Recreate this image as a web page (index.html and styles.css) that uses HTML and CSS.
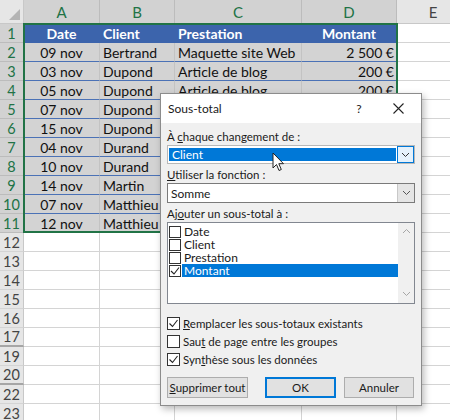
FILE: index.html
```html
<!DOCTYPE html>
<html lang="fr">
<head>
<meta charset="utf-8">
<title>Sous-total</title>
<link rel="stylesheet" href="styles.css">
</head>
<body>
<div class="sheet">
  <div class="row colheads">
    <div class="corner"><span class="tri"></span></div>
    <div class="ch sel">A</div>
    <div class="ch sel">B</div>
    <div class="ch sel">C</div>
    <div class="ch sel">D</div>
    <div class="ch">E</div>
  </div>
  <div class="row thead">
    <div class="rh sel">1</div>
    <div class="c hd center">Date</div>
    <div class="c hd">Client</div>
    <div class="c hd">Prestation</div>
    <div class="c hd center">Montant</div>
    <div class="c e"></div>
  </div>
  <div class="row data"><div class="rh sel">2</div><div class="c center">09 nov</div><div class="c">Bertrand</div><div class="c">Maquette site Web</div><div class="c right">2 500 €</div><div class="c e"></div></div>
  <div class="row data"><div class="rh sel">3</div><div class="c center">03 nov</div><div class="c">Dupond</div><div class="c">Article de blog</div><div class="c right">200 €</div><div class="c e"></div></div>
  <div class="row data"><div class="rh sel">4</div><div class="c center">05 nov</div><div class="c">Dupond</div><div class="c">Article de blog</div><div class="c right">200 €</div><div class="c e"></div></div>
  <div class="row data"><div class="rh sel">5</div><div class="c center">07 nov</div><div class="c">Dupond</div><div class="c">Article de blog</div><div class="c right">200 €</div><div class="c e"></div></div>
  <div class="row data"><div class="rh sel">6</div><div class="c center">15 nov</div><div class="c">Dupond</div><div class="c">Article de blog</div><div class="c right">200 €</div><div class="c e"></div></div>
  <div class="row data"><div class="rh sel">7</div><div class="c center">04 nov</div><div class="c">Durand</div><div class="c">Article de blog</div><div class="c right">200 €</div><div class="c e"></div></div>
  <div class="row data"><div class="rh sel">8</div><div class="c center">10 nov</div><div class="c">Durand</div><div class="c">Article de blog</div><div class="c right">200 €</div><div class="c e"></div></div>
  <div class="row data"><div class="rh sel">9</div><div class="c center">14 nov</div><div class="c">Martin</div><div class="c">Article de blog</div><div class="c right">200 €</div><div class="c e"></div></div>
  <div class="row data"><div class="rh sel">10</div><div class="c center">07 nov</div><div class="c">Matthieu</div><div class="c">Article de blog</div><div class="c right">200 €</div><div class="c e"></div></div>
  <div class="row data last"><div class="rh sel">11</div><div class="c center">12 nov</div><div class="c">Matthieu</div><div class="c">Article de blog</div><div class="c right">200 €</div><div class="c e"></div></div>
  <div class="row blank"><div class="rh">12</div><div class="c"></div><div class="c"></div><div class="c"></div><div class="c"></div><div class="c"></div></div>
  <div class="row blank"><div class="rh">13</div><div class="c"></div><div class="c"></div><div class="c"></div><div class="c"></div><div class="c"></div></div>
  <div class="row blank"><div class="rh">14</div><div class="c"></div><div class="c"></div><div class="c"></div><div class="c"></div><div class="c"></div></div>
  <div class="row blank"><div class="rh">15</div><div class="c"></div><div class="c"></div><div class="c"></div><div class="c"></div><div class="c"></div></div>
  <div class="row blank"><div class="rh">16</div><div class="c"></div><div class="c"></div><div class="c"></div><div class="c"></div><div class="c"></div></div>
  <div class="row blank"><div class="rh hid">17</div><div class="c"></div><div class="c"></div><div class="c"></div><div class="c"></div><div class="c"></div></div>
  <div class="row blank"><div class="rh">19</div><div class="c"></div><div class="c"></div><div class="c"></div><div class="c"></div><div class="c"></div></div>
  <div class="row blank"><div class="rh hid">20</div><div class="c"></div><div class="c"></div><div class="c"></div><div class="c"></div><div class="c"></div></div>
  <div class="row blank"><div class="rh">22</div><div class="c"></div><div class="c"></div><div class="c"></div><div class="c"></div><div class="c"></div></div>
  <div class="row blank"><div class="rh">23</div><div class="c"></div><div class="c"></div><div class="c"></div><div class="c"></div><div class="c"></div></div>

  <div class="selection"></div>

  <div class="dialog">
    <div class="titlebar">
      <span class="title">Sous-total</span>
      <span class="help">?</span>
      <span class="close"><svg width="11" height="11" viewBox="0 0 11 11"><path d="M0.5 0.5 L10.5 10.5 M10.5 0.5 L0.5 10.5" stroke="#222" stroke-width="1.1" fill="none"/></svg></span>
    </div>
    <div class="body">
      <div class="lbl l1">À <u>c</u>haque changement de :</div>
      <div class="select focus">
        <span class="val hl">Client</span>
        <span class="drop hot"><svg width="9" height="6" viewBox="0 0 9 6"><path d="M1 1 L4.5 4.5 L8 1" stroke="#333" stroke-width="1" fill="none"/></svg></span>
      </div>
      <div class="lbl l2"><u>U</u>tiliser la fonction :</div>
      <div class="select">
        <span class="val">Somme</span>
        <span class="drop"><svg width="9" height="6" viewBox="0 0 9 6"><path d="M1 1 L4.5 4.5 L8 1" stroke="#555" stroke-width="1" fill="none"/></svg></span>
      </div>
      <div class="lbl l3">Aj<u>o</u>uter un sous-total à :</div>
      <div class="listbox">
        <div class="items">
          <div class="item"><span class="cb"></span><span class="it">Date</span></div>
          <div class="item"><span class="cb"></span><span class="it">Client</span></div>
          <div class="item"><span class="cb"></span><span class="it">Prestation</span></div>
          <div class="item"><span class="cb"><svg width="10" height="10" viewBox="0 0 10 10"><path d="M1 5 L4 8 L9 1.5" stroke="#222" stroke-width="1.1" fill="none"/></svg></span><span class="it hl">Montant</span></div>
        </div>
        <div class="scroll">
          <svg width="9" height="6" viewBox="0 0 9 6"><path d="M1 5 L4.5 1.5 L8 5" stroke="#a6a6a6" stroke-width="1" fill="none"/></svg>
          <svg width="9" height="6" viewBox="0 0 9 6"><path d="M1 1 L4.5 4.5 L8 1" stroke="#a6a6a6" stroke-width="1" fill="none"/></svg>
        </div>
      </div>
      <div class="checks">
        <div class="check"><span class="cb"><svg width="11" height="11" viewBox="0 0 11 11"><path d="M1.5 5.5 L4.5 8.5 L9.5 2" stroke="#222" stroke-width="1.1" fill="none"/></svg></span><span><u>R</u>emplacer les sous-totaux existants</span></div>
        <div class="check"><span class="cb"></span><span>Sau<u>t</u> de page entre les groupes</span></div>
        <div class="check"><span class="cb"><svg width="11" height="11" viewBox="0 0 11 11"><path d="M1.5 5.5 L4.5 8.5 L9.5 2" stroke="#222" stroke-width="1.1" fill="none"/></svg></span><span>Syn<u>t</u>hèse sous les données</span></div>
      </div>
      <div class="buttons">
        <button class="btn b-del"><u>S</u>upprimer tout</button>
        <button class="btn b-ok">OK</button>
        <button class="btn b-cancel">Annuler</button>
      </div>
    </div>
  </div>

  <svg class="cursor" width="13" height="20" viewBox="0 0 13 20"><path d="M1 1 L1 16 L4.5 12.5 L7 18.5 L9.3 17.5 L6.8 11.7 L11.5 11.7 Z" fill="#fff" stroke="#222" stroke-width="1" stroke-linejoin="round"/></svg>
</div>
</body>
</html>
```
FILE: styles.css
```css
* { box-sizing: border-box; }
html, body { margin: 0; padding: 0; }
body {
  width: 450px;
  height: 420px;
  overflow: hidden;
  background: #fff;
  font-family: Lato, "Liberation Sans", sans-serif;
}
.sheet {
  position: relative;
  width: 450px;
  height: 420px;
  overflow: hidden;
}
.row {
  display: grid;
  grid-template-columns: 24px 76px 75px 127px 95px 73px;
  height: 19px;
  width: 470px;
}
.colheads { height: 24px; background: #e6e6e6; }
.corner {
  position: relative;
  background: #e6e6e6;
  border-right: 1px solid #c8c8c8;
  border-bottom: 1px solid #c8c8c8;
}
.tri {
  position: absolute;
  right: 3px;
  bottom: 3px;
  width: 0;
  height: 0;
  border-left: 11px solid transparent;
  border-bottom: 11px solid #b4b4b4;
}
.ch {
  display: flex;
  align-items: center;
  justify-content: center;
  font-size: 15px;
  color: #444;
  background: #e6e6e6;
  border-right: 1px solid #c8c8c8;
  border-bottom: 1px solid #c8c8c8;
  padding-top: 1px;
}
.ch.sel { background: #d2d2d2; color: #217346; border-right-color: #bcbcbc; }
.rh {
  display: flex;
  align-items: center;
  justify-content: center;
  font-size: 14.5px;
  color: #444;
  background: #e6e6e6;
  border-right: 1px solid #c8c8c8;
  border-bottom: 1px solid #d4d4d4;
}
.rh.sel { background: #d2d2d2; color: #217346; border-bottom-color: #bcbcbc; }
.rh.hid { border-bottom: 2px solid #a6a6a6; }
.c {
  display: flex;
  align-items: center;
  font-size: 14px;
  color: #111;
  padding: 0 3px;
  white-space: nowrap;
  overflow: hidden;
  border-right: 1px solid #d4d4d4;
  border-bottom: 1px solid #d4d4d4;
}
.c.center { justify-content: center; }
.c.right { justify-content: flex-end; padding-right: 2px; }
.thead .c.hd {
  background: #3c64ac;
  color: #fff;
  font-weight: bold;
  border-right-color: #3c64ac;
  border-bottom-color: #3c64ac;
}
.data .c {
  background: #d3d3d3;
  border-right-color: #c3c3c3;
  border-bottom-color: #4b72b6;
}
.data.last .c { border-bottom-color: #d3d3d3; }
.data .c.e, .thead .c.e { background: #fff; border-right-color: #d4d4d4; border-bottom-color: #d4d4d4; }

.selection {
  position: absolute;
  left: 23px;
  top: 23px;
  width: 375px;
  height: 210px;
  border: 2px solid #217346;
  pointer-events: none;
}

.dialog {
  position: absolute;
  left: 160px;
  top: 93px;
  width: 262px;
  height: 313px;
  background: #f0f0f0;
  border: 1px solid #8c8c8c;
  box-shadow: 2px 3px 7px rgba(0, 0, 0, 0.28);
  font-family: Lato, "Liberation Sans", sans-serif;
  font-size: 11.5px;
  color: #1a1a1a;
  display: flex;
  flex-direction: column;
}
.titlebar {
  height: 29px;
  background: #fff;
  display: flex;
  align-items: center;
  padding-left: 7px;
}
.title { flex: 1; font-size: 12px; }
.help { width: 14px; font-size: 12px; margin-right: 27px; text-align: center; }
.close { width: 11px; height: 11px; display: flex; align-items: center; margin-right: 17px; }
.body {
  display: flex;
  flex-direction: column;
  padding: 0 6px 0 6px;
}
.lbl { height: 15px; line-height: 15px; white-space: nowrap; }
.l1 { margin-top: 6px; margin-bottom: 1px; }
.l2 { margin-top: 3px; margin-bottom: 1px; }
.l3 { margin-top: 3px; margin-bottom: 1px; }
u { text-decoration-thickness: 1px; text-underline-offset: 1px; }
.select {
  height: 20px;
  background: #fff;
  border: 1px solid #7a7a7a;
  display: flex;
  align-items: stretch;
}
.select.focus { border-color: #b8b8b8; height: 19px; }
.select .val {
  flex: 1;
  display: flex;
  align-items: center;
  padding-left: 3px;
  font-size: 12px;
}
.select.focus .val { margin: 2px 1px 2px 1px; }
.hl { background: #0078d7; color: #fff; }
.drop {
  width: 17px;
  display: flex;
  align-items: center;
  justify-content: center;
  background: #e5e5e5;
  border-left: 1px solid #c8c8c8;
}
.drop.hot { background: #e5f1fb; border: 1px solid #0078d7; }
.listbox {
  height: 82px;
  background: #fff;
  border: 1px solid #828790;
  display: flex;
}
.items { flex: 1; padding: 2px 0 0 1px; }
.item { height: 13px; display: flex; align-items: center; }
.item .cb {
  width: 12px;
  height: 12px;
  border: 1px solid #333;
  background: #fff;
  display: flex;
  align-items: center;
  justify-content: center;
  flex: none;
}
.item .it { height: 13px; line-height: 13px; padding: 0 2px; margin-left: 1px; font-size: 12px; }
.item .it.hl { flex: 1; }
.scroll {
  width: 16px;
  background: #f0f0f0;
  display: flex;
  flex-direction: column;
  justify-content: space-between;
  align-items: center;
  padding: 5px 0 6px;
}
.checks { margin-top: 10px; display: flex; flex-direction: column; }
.check { height: 18px; display: flex; align-items: center; gap: 3px; white-space: nowrap; }
.check .cb {
  width: 13px;
  height: 13px;
  border: 1px solid #333;
  background: #fff;
  display: flex;
  align-items: center;
  justify-content: center;
  flex: none;
}
.buttons {
  margin-top: 9px;
  display: flex;
}
.btn {
  height: 21px;
  font-family: Lato, "Liberation Sans", sans-serif;
  font-size: 11.5px;
  color: #1a1a1a;
  background: #e1e1e1;
  border: 1px solid #adadad;
  padding: 0;
  white-space: nowrap;
}
.b-del { width: 81px; }
.b-ok { width: 71px; margin-left: 17px; border: 2px solid #0078d7; }
.b-cancel { width: 70px; margin-left: 8px; }
.cursor {
  position: absolute;
  left: 272px;
  top: 152px;
}
```
